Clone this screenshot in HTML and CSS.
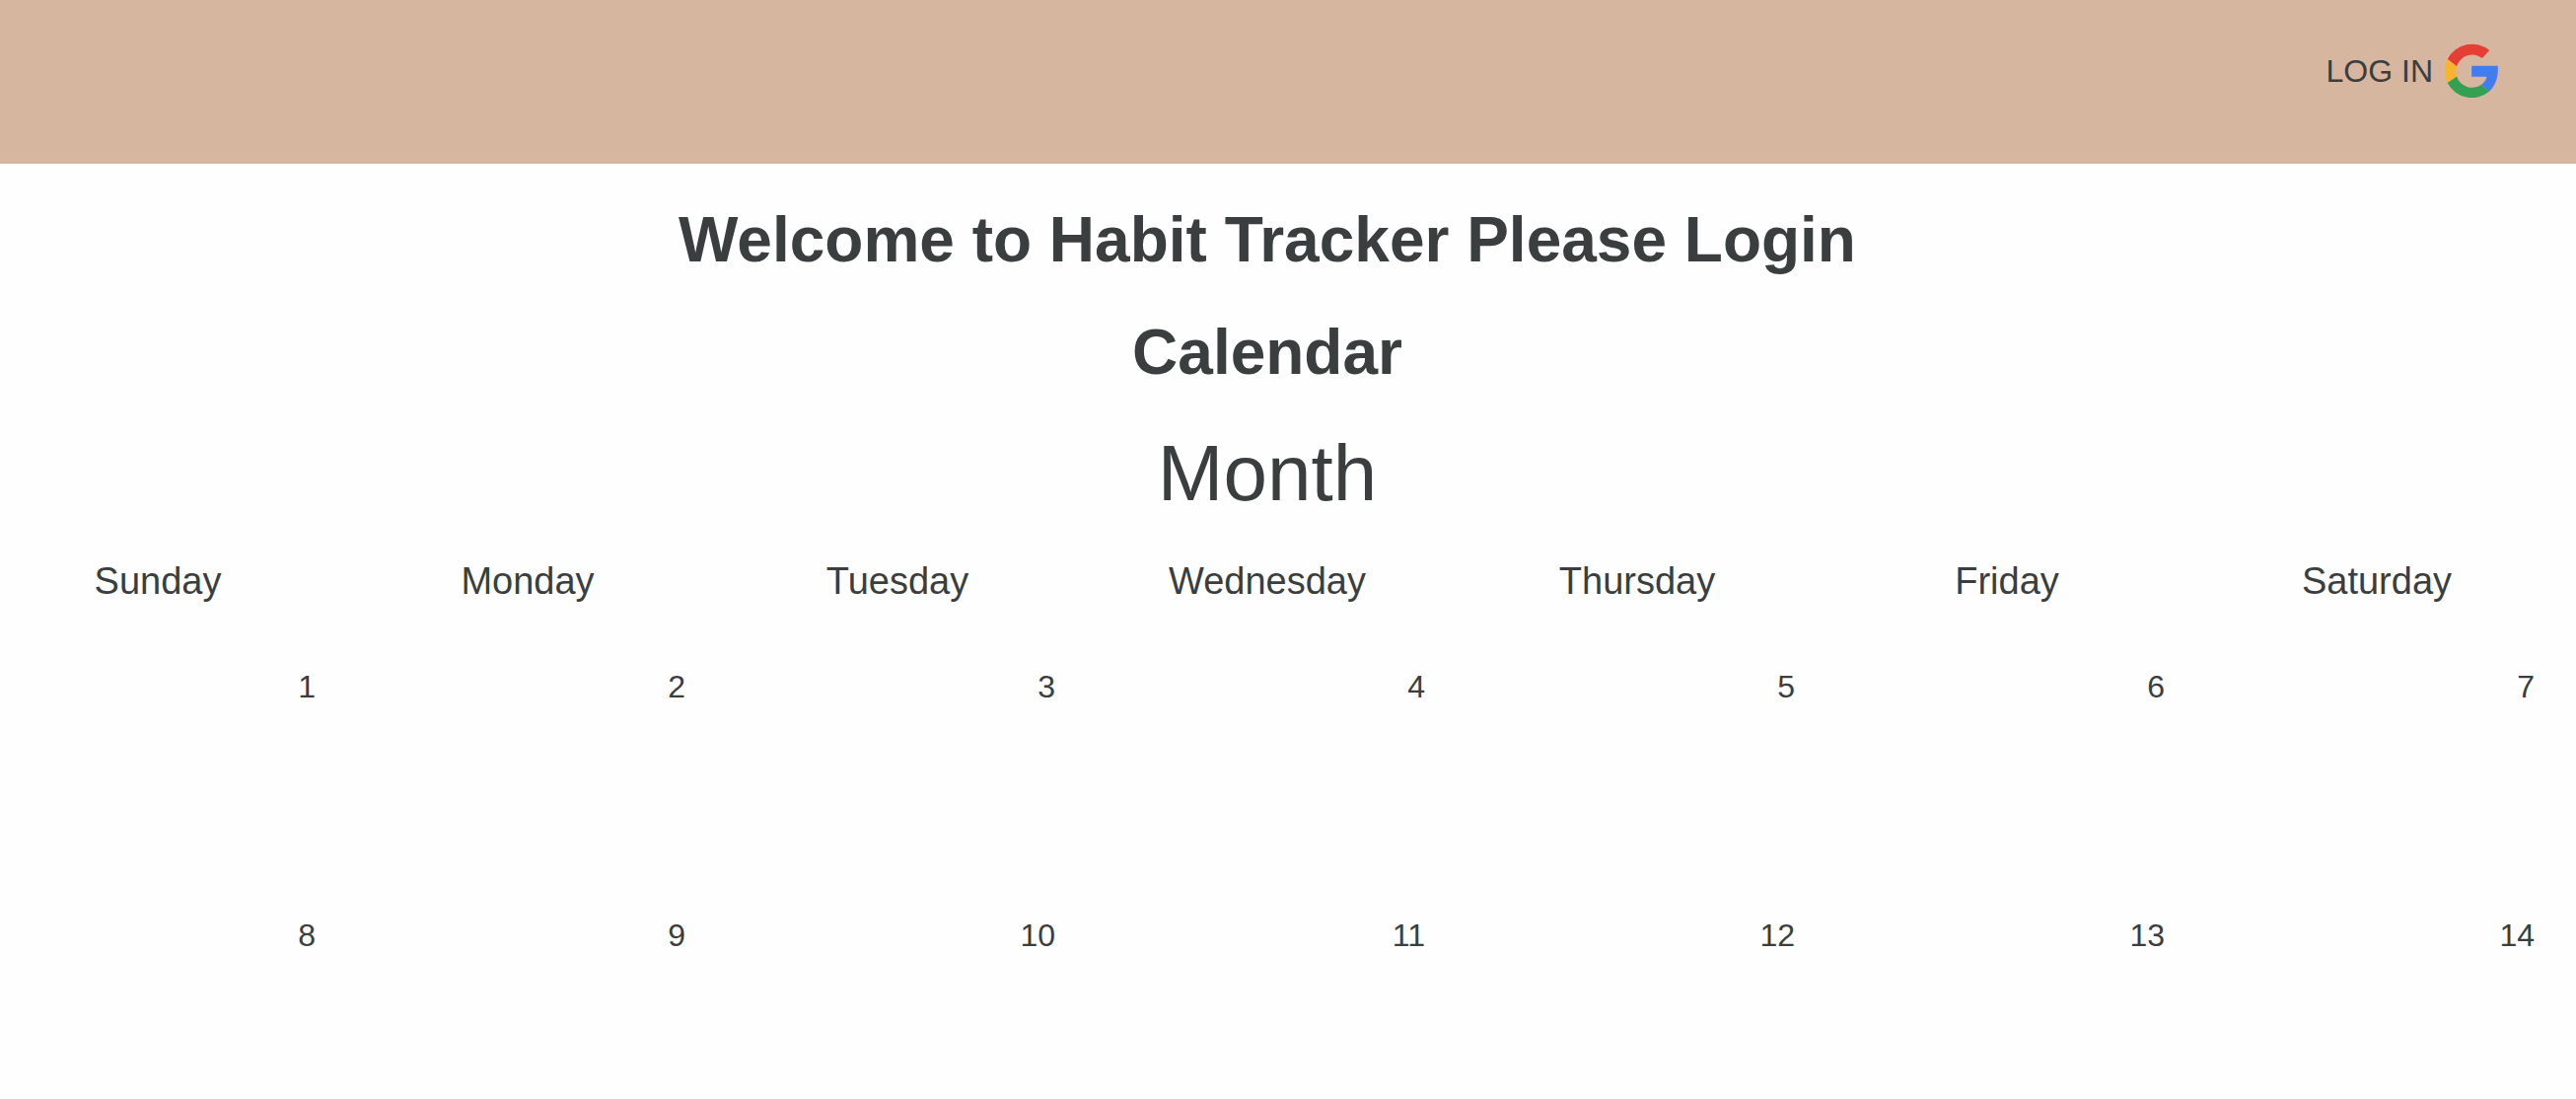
FILE: index.html
```html
<!DOCTYPE html>
<html lang="en">
<head>
  <meta charset="utf-8">
  <meta name="viewport" content="width=device-width, initial-scale=1">
  <title>Habit Tracker</title>
  <link rel="stylesheet" href="styles.css">
</head>
<body>
  <header class="site-header">
    <a class="login" href="#login">
      <span>LOG IN</span>
      <svg class="login-icon" viewBox="28 28 161 167" aria-hidden="true">
        <path fill="#e53e35" d="M163 49 A83 83 0 0 0 36 76 L64 97 A49 49 0 0 1 141 73Z"/>
        <path fill="#f9b42f" d="M36 76 A83 83 0 0 0 36 147 L64 128 A51 51 0 0 1 64 97Z"/>
        <path fill="#34a051" d="M36 147 A83 83 0 0 0 163 173 L138 153 A49 49 0 0 1 64 128Z"/>
        <path fill="#427cee" d="M109 96 H188 C191 126 182 155 163 173 L138 153 Q151 145 155 129 H109Z"/>
      </svg>
    </a>
  </header>
  <main class="content">
    <h1 class="title">Welcome to Habit Tracker Please Login</h1>
    <h2 class="title">Calendar</h2>
    <table class="calendar">
      <caption class="month">Month</caption>
      <thead>
        <tr>
          <th scope="col">Sunday</th>
          <th scope="col">Monday</th>
          <th scope="col">Tuesday</th>
          <th scope="col">Wednesday</th>
          <th scope="col">Thursday</th>
          <th scope="col">Friday</th>
          <th scope="col">Saturday</th>
        </tr>
      </thead>
      <tbody>
        <tr><td>1</td><td>2</td><td>3</td><td>4</td><td>5</td><td>6</td><td>7</td></tr>
        <tr><td>8</td><td>9</td><td>10</td><td>11</td><td>12</td><td>13</td><td>14</td></tr>
      </tbody>
    </table>
  </main>
</body>
</html>
```
FILE: styles.css
```css
:root {
  --ink: #3a3e3f;
  --day-gap: 55px;
}

* {
  box-sizing: border-box;
}

body {
  margin: 0;
  overflow-x: hidden;
  background: #fefefe;
  color: var(--ink);
  font-family: Helvetica, "Liberation Sans", Arial, sans-serif;
  font-size: 32px;
  line-height: 38px;
}

.site-header {
  display: flex;
  justify-content: flex-end;
  padding: 44px 79px 66px;
  background: #d7b6a0;
}

.login {
  display: flex;
  align-items: center;
  gap: 12px;
  color: inherit;
  text-decoration: none;
}

.login-icon {
  width: 54px;
  height: 56px;
}

.content {
  padding-right: 42px;
}

.title {
  margin: 40px 0;
  font-size: 64px;
  font-weight: bold;
  line-height: 74px;
  text-align: center;
}

/* Each cell carries its gap on the left; the first one hangs outside the page. */
.calendar {
  width: calc(100% + var(--day-gap));
  margin-left: calc(-1 * var(--day-gap));
  table-layout: fixed;
  border-collapse: collapse;
}

.month {
  padding: 0 0 40px var(--day-gap);
  font-size: 80px;
  line-height: 92px;
  text-align: center;
}

.calendar th,
.calendar td {
  padding: 0 0 0 var(--day-gap);
  vertical-align: top;
}

.calendar th {
  height: 111px;
  font-size: 38px;
  font-weight: normal;
  line-height: 46px;
  text-align: center;
}

.calendar td {
  height: 252px;
  text-align: right;
}

.calendar tbody tr:last-child td {
  height: 152px;
}
```
